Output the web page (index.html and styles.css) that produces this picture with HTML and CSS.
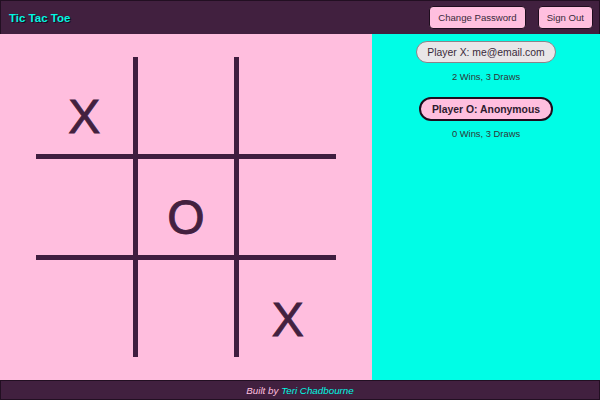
FILE: index.html
```html
<!DOCTYPE html>
<html>
<head>
<meta charset="utf-8">
<link rel="stylesheet" href="styles.css">
</head>
<body>
<header class="topbar">
  <div class="title">Tic Tac Toe</div>
  <div class="actions">
    <button class="top-btn">Change Password</button>
    <button class="top-btn">Sign Out</button>
  </div>
</header>
<main class="content">
  <section class="board-area">
    <div class="board">
      <div class="cell">X</div>
      <div class="cell"></div>
      <div class="cell"></div>
      <div class="cell"></div>
      <div class="cell">O</div>
      <div class="cell"></div>
      <div class="cell"></div>
      <div class="cell"></div>
      <div class="cell">X</div>
    </div>
  </section>
  <aside class="players">
    <div class="pill pill-x">Player X: me@email.com</div>
    <div class="record">2 Wins, 3 Draws</div>
    <div class="pill pill-o">Player O: Anonymous</div>
    <div class="record">0 Wins, 3 Draws</div>
  </aside>
</main>
<footer class="footer">
  <span class="built">Built by</span>&nbsp;<span class="author">Teri Chadbourne</span>
</footer>
</body>
</html>
```

FILE: styles.css
```css
html, body {
  margin: 0;
  padding: 0;
}
body {
  width: 600px;
  height: 400px;
  display: flex;
  flex-direction: column;
  font-family: "Liberation Sans", Arial, sans-serif;
  overflow: hidden;
}
.topbar {
  height: 34px;
  box-sizing: border-box;
  background: #41203f;
  border: 1px solid #220f22;
  border-bottom: none;
  display: flex;
  align-items: center;
  justify-content: space-between;
  padding: 0 6px 0 8px;
}
.title {
  color: #00f7e2;
  font-size: 11.5px;
  font-weight: bold;
  text-shadow: 1px 1px 0 #1c0a1c;
}
.actions {
  display: flex;
  gap: 12px;
}
.top-btn {
  height: 23px;
  box-sizing: border-box;
  background: #ffbfdf;
  border: 1px solid #1e0d1e;
  border-radius: 4px;
  font-family: "Liberation Sans", Arial, sans-serif;
  font-size: 9.6px;
  color: #3a2a3a;
  padding: 0 8px;
}
.content {
  height: 346px;
  display: flex;
}
.board-area {
  width: 372px;
  background: #ffbede;
  display: flex;
  align-items: center;
  justify-content: center;
}
.board {
  width: 300px;
  height: 300px;
  display: grid;
  grid-template-columns: repeat(3, 1fr);
  grid-template-rows: repeat(3, 1fr);
  gap: 5px;
  background: #3f1d3f;
}
.cell {
  background: #ffbede;
  display: flex;
  align-items: center;
  justify-content: center;
  padding-top: 22px;
  box-sizing: border-box;
  font-size: 48px;
  color: #43213f;
  -webkit-text-stroke: 0.9px #43213f;
}
.players {
  flex: 1;
  background: #00fde6;
  display: flex;
  flex-direction: column;
  align-items: center;
  padding-top: 7px;
}
.pill {
  box-sizing: border-box;
  display: flex;
  align-items: center;
  font-size: 10.4px;
  color: #3a2a3a;
  border-radius: 12px;
}
.pill-x {
  height: 22px;
  padding: 0 10px;
  background: #e8e6e8;
  border: 1px solid #8a848a;
}
.pill-o {
  height: 24px;
  padding: 0 11px;
  margin-top: 14px;
  background: #ffbfdf;
  border: 2px solid #1e0d1e;
  font-weight: bold;
  color: #2e1a2e;
}
.record {
  font-size: 9.4px;
  line-height: 12px;
  color: #2f3636;
  margin-top: 8px;
}
.pill-o + .record {
  margin-top: 7px;
}
.footer {
  height: 20px;
  box-sizing: border-box;
  background: #41203f;
  border: 1px solid #220f22;
  display: flex;
  align-items: center;
  justify-content: center;
  font-style: italic;
  font-size: 9.8px;
}
.built {
  color: #ffbfdf;
}
.author {
  color: #00f7e2;
}
```
